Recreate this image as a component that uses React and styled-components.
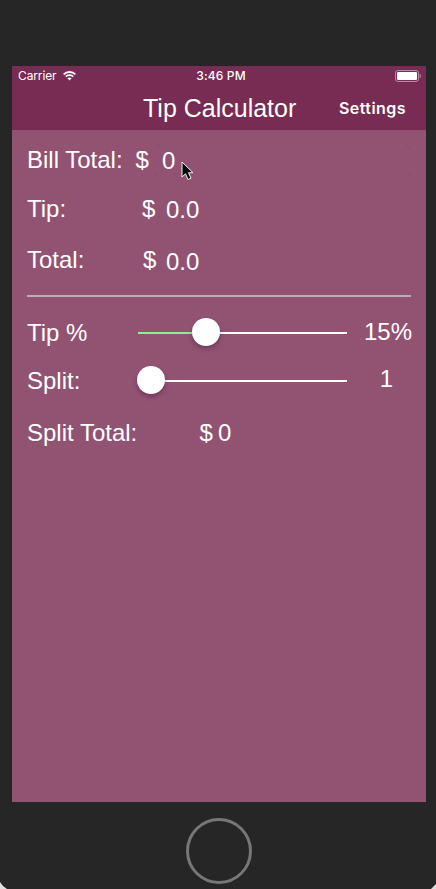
import React from "react";
import styled, { createGlobalStyle } from "styled-components";

const GlobalStyle = createGlobalStyle`
  *, *::before, *::after { box-sizing: border-box; }
  body { margin: 0; background: #e0e0e0; }
`;

const Device = styled.div`
  width: 436px;
  height: 889px;
  padding: 66px 10px 0 12px;
  display: flex;
  flex-direction: column;
  overflow: hidden;
  background: #262626;
  clip-path: polygon(0 0, 100% 0, 100% 884px, 431px 100%, 7px 100%, 3px 886px, 0 882px);
  font-family: "Liberation Sans", Arial, sans-serif;
  color: #fff;
`;

const Screen = styled.main`
  height: 736px;
  flex: none;
  background: #925373;
`;

const Header = styled.header`
  height: 64px;
  background: #782b53;
`;

const StatusBar = styled.div`
  height: 20px;
  padding: 0 6px;
  display: grid;
  grid-template-columns: 1fr auto 1fr;
  align-items: center;
  font: 400 12px/20px Inter, sans-serif;
`;

const Carrier = styled.div`
  display: flex;
  align-items: center;
  gap: 6px;
  letter-spacing: -0.12px;
`;

const Clock = styled.time`
  font-weight: 500;
  letter-spacing: 0.15px;
  transform: translateX(2px);
`;

const BatteryIcon = styled.svg`
  justify-self: end;
  margin-right: -1px;
`;

const NavBar = styled.nav`
  height: 44px;
  padding: 0 20px 0 131px;
  display: flex;
  align-items: center;
  justify-content: space-between;
`;

const Title = styled.h1`
  margin: 0;
  font-size: 25px;
  font-weight: 400;
  line-height: 44px;
  white-space: nowrap;
`;

const SettingsButton = styled.button`
  padding: 0;
  border: 0;
  background: none;
  color: inherit;
  font: 600 16px/44px Inter, sans-serif;
  letter-spacing: 0.45px;
`;

const Row = styled.div`
  height: 28px;
  margin: ${(p) => p.$gap}px 15px 0;
  display: flex;
  font-size: 24px;
  line-height: 28px;
  white-space: nowrap;
`;

const Label = styled.span`
  flex: none;
  width: ${(p) => p.$width}px;
`;

const Currency = styled.span`
  flex: none;
  width: ${(p) => p.$width}px;
`;

const Amount = styled.output`
  padding-top: ${(p) => p.$drop || 0}px;
`;

const BillField = styled.div`
  flex: 1;
  height: 33px;
  margin-top: -1px;
  display: flex;
  gap: 2px;
`;

const BillAmount = styled.output`
  flex: 1;
  padding-top: 2px;
`;

const FieldCorners = styled.svg`
  flex: none;
  stroke: #754060;
  stroke-dasharray: 1 2;
  fill: none;
`;

const PointerIcon = styled.svg`
  position: absolute;
  left: 181px;
  top: 161px;
`;

const Divider = styled.hr`
  height: 2px;
  margin: 21px 15px 0;
  border: 0;
  background: #b9b0b6;
`;

const Slider = styled.div`
  flex: none;
  width: 209px;
  height: 28px;
  margin-top: -1px;
  position: relative;
  display: flex;
  align-items: center;
`;

const Track = styled.div`
  width: 100%;
  height: 2px;
  margin-top: 2px;
  background: linear-gradient(to right, #86f38c ${(p) => p.$fill}px, #fff ${(p) => p.$fill}px);
`;

const Thumb = styled.div`
  position: absolute;
  left: ${(p) => p.$left}px;
  top: 0;
  width: 28px;
  height: 28px;
  border-radius: 50%;
  background: #fff;
  box-shadow: 0 3px 5px rgba(50, 10, 35, 0.3), 0 1px 1px rgba(50, 10, 35, 0.12);
`;

const SliderValue = styled.output`
  flex: 1;
  margin-top: ${(p) => p.$shift}px;
  margin-right: ${(p) => p.$inset}px;
  text-align: right;
`;

const HomeButton = styled.button`
  flex: none;
  width: 66px;
  height: 66px;
  margin: 16px 0 0 174px;
  padding: 0;
  border: 3px solid #777;
  border-radius: 50%;
  background: transparent;
`;

function SliderControl({ fill, left }) {
  return (
    <Slider>
      <Track $fill={fill} />
      <Thumb $left={left} />
    </Slider>
  );
}

export default function App() {
  return (
    <>
      <GlobalStyle />
      <Device>
        <Screen>
          <Header>
            <StatusBar>
              <Carrier>
                Carrier
                <svg width="13" height="10" viewBox="0 0 13 10" fill="none" stroke="#fff">
                  <path d="M.6 3.4C3.8 .2 9.2 .2 12.4 3.4" strokeWidth="1.9" />
                  <path d="M2.7 5.7C4.8 3.6 8.2 3.6 10.3 5.7" strokeWidth="1.7" />
                  <path d="M4.4 7.3Q6.5 5.5 8.6 7.3L6.5 9.6Z" fill="#fff" stroke="none" />
                </svg>
              </Carrier>
              <Clock>3:46 PM</Clock>
              <BatteryIcon width="26" height="12" viewBox="0 0 26 12">
                <rect x=".5" y=".5" width="23" height="11" rx="2.5" fill="none" stroke="#b98ca3" />
                <rect x="2" y="2" width="20" height="8" rx="1.3" fill="#fff" />
                <path d="M25 4.2Q26 6 25 7.8Z" fill="#b98ca3" stroke="#b98ca3" strokeWidth=".6" />
              </BatteryIcon>
            </StatusBar>
            <NavBar>
              <Title>Tip Calculator</Title>
              <SettingsButton>Settings</SettingsButton>
            </NavBar>
          </Header>

          <Row $gap={16}>
            <Label $width={108.5}>Bill Total:</Label>
            <Currency $width={18.5}>$</Currency>
            <BillField>
              <FieldCorners width="6" height="33" viewBox="0 0 6 33">
                <path d="M5 .5Q1.5 1 1 4.5M1 28.5Q1.5 31.5 5 31.5" />
              </FieldCorners>
              <BillAmount>0</BillAmount>
              <FieldCorners width="6" height="33" viewBox="0 0 6 33">
                <path d="M1 .5Q4.5 1 5 4.5M5 28.5Q4.5 31.5 1 31.5" />
              </FieldCorners>
            </BillField>
          </Row>
          <Row $gap={21}>
            <Label $width={115}>Tip:</Label>
            <Currency $width={24}>$</Currency>
            <Amount $drop={1}>0.0</Amount>
          </Row>
          <Row $gap={23}>
            <Label $width={116}>Total:</Label>
            <Currency $width={23}>$</Currency>
            <Amount $drop={2}>0.0</Amount>
          </Row>
          <Divider />
          <Row $gap={22}>
            <Label $width={111}>Tip %</Label>
            <SliderControl fill={62} left={54} />
            <SliderValue $shift={-1} $inset={-1}>15%</SliderValue>
          </Row>
          <Row $gap={20}>
            <Label $width={111}>Split:</Label>
            <SliderControl fill={0} left={-1} />
            <SliderValue $shift={-2} $inset={18}>1</SliderValue>
          </Row>
          <Row $gap={24}>
            <Label $width={172.5}>Split Total:</Label>
            <Currency $width={18.5}>$</Currency>
            <Amount>0</Amount>
          </Row>
        </Screen>
        <HomeButton aria-label="Home" />
      </Device>
      <PointerIcon width="13" height="20" viewBox="0 0 13 20">
        <path d="M1 1V16L4.5 12.8L7 18.5L10 17.2L7.5 11.7H12Z" fill="#080808" stroke="#eee" strokeWidth="1" />
      </PointerIcon>
    </>
  );
}
